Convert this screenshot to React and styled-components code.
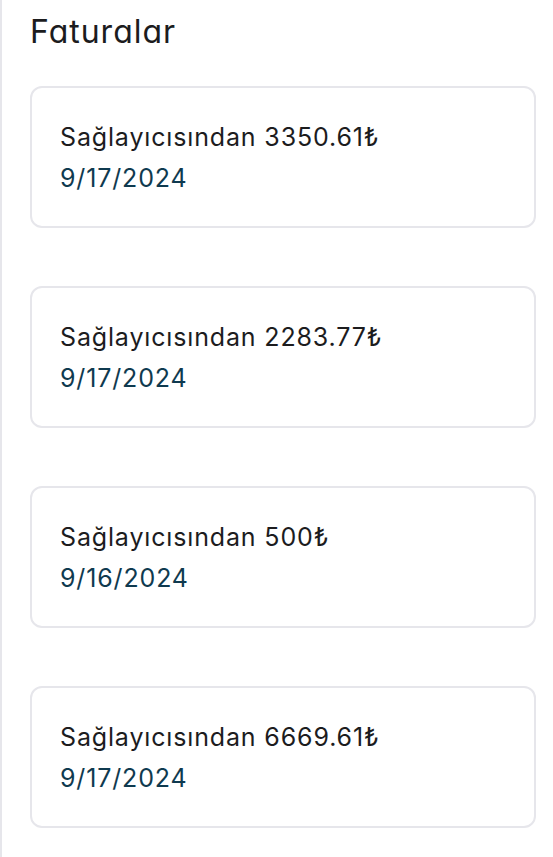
import React from "react";
import styled, { createGlobalStyle } from "styled-components";

const GlobalStyle = createGlobalStyle`
  html, body {
    margin: 0;
    padding: 0;
    background: #ffffff;
  }
  body {
    font-family: Inter, "Noto Sans", sans-serif;
  }
`;

const Panel = styled.div`
  min-height: 857px;
  box-sizing: border-box;
  border-left: 2px solid #e6e6eb;
  padding: 12px 17px 40px 28px;
`;

const Title = styled.h1`
  margin: 0 0 34px;
  font-size: 32px;
  font-weight: 400;
  line-height: 40px;
  letter-spacing: 1px;
  color: #1c1c1e;
  font-feature-settings: "cv11";
`;

const List = styled.div`
  display: flex;
  flex-direction: column;
  gap: 58px;
`;

const Card = styled.div`
  border: 2px solid #e6e6eb;
  border-radius: 12px;
  padding: 29px 28px 27px;
  display: flex;
  flex-direction: column;
`;

const Line = styled.div`
  font-size: 25px;
  line-height: 41px;
  letter-spacing: 0.85px;
  color: ${(p) => (p.$date ? "#0f3a4f" : "#1c1c1e")};
`;

const invoices = [
  { amount: "3350.61", date: "9/17/2024" },
  { amount: "2283.77", date: "9/17/2024" },
  { amount: "500", date: "9/16/2024" },
  { amount: "6669.61", date: "9/17/2024" },
];

const App = () => {
  return (
    <>
      <GlobalStyle />
      <Panel>
        <Title>Faturalar</Title>
        <List>
          {invoices.map((inv, i) => (
            <Card key={i}>
              <Line>Sağlayıcısından {inv.amount}₺</Line>
              <Line $date>{inv.date}</Line>
            </Card>
          ))}
        </List>
      </Panel>
    </>
  );
};

export default App;
